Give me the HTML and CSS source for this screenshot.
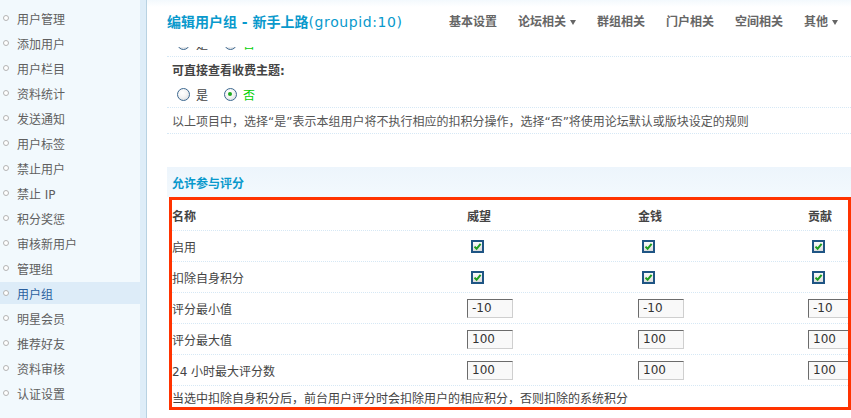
FILE: index.html
```html
<!DOCTYPE html>
<html lang="zh-CN">
<head>
<meta charset="utf-8">
<title>编辑用户组</title>
<link rel="stylesheet" href="styles.css">
</head>
<body>
<div class="app">
  <aside class="side">
    <ul class="menu">
      <li><span class="dot"></span>用户管理</li>
      <li><span class="dot"></span>添加用户</li>
      <li><span class="dot"></span>用户栏目</li>
      <li><span class="dot"></span>资料统计</li>
      <li><span class="dot"></span>发送通知</li>
      <li><span class="dot"></span>用户标签</li>
      <li><span class="dot"></span>禁止用户</li>
      <li><span class="dot"></span>禁止 IP</li>
      <li><span class="dot"></span>积分奖惩</li>
      <li><span class="dot"></span>审核新用户</li>
      <li><span class="dot"></span>管理组</li>
      <li class="on"><span class="dot"></span>用户组</li>
      <li><span class="dot"></span>明星会员</li>
      <li><span class="dot"></span>推荐好友</li>
      <li><span class="dot"></span>资料审核</li>
      <li><span class="dot"></span>认证设置</li>
    </ul>
  </aside>
  <div class="gutter"></div>
  <main class="main">
    <header class="topbar">
      <h3 class="title"><b class="cjk">编辑用户组 - 新手上路</b><span class="gid">(groupid:10)</span></h3>
      <nav class="nav">
        <span class="nav-item">基本设置</span>
        <span class="nav-item">论坛相关<i class="caret"></i></span>
        <span class="nav-item">群组相关</span>
        <span class="nav-item">门户相关</span>
        <span class="nav-item">空间相关</span>
        <span class="nav-item">其他<i class="caret"></i></span>
      </nav>
    </header>
    <div class="content">
      <div class="sheet">
        <div class="row clip">
          <label class="opt"><span class="radio"></span>是</label>
          <label class="opt yes"><span class="radio checked"></span>否</label>
        </div>
        <div class="row label">可直接查看收费主题:</div>
        <div class="row radios">
          <label class="opt"><span class="radio"></span>是</label>
          <label class="opt yes"><span class="radio checked"></span>否</label>
        </div>
        <div class="row tip">以上项目中，选择“是”表示本组用户将不执行相应的扣积分操作，选择“否”将使用论坛默认或版块设定的规则</div>

        <div class="band">允许参与评分</div>

        <div class="marked">
          <div class="grid">
            <div class="gr head">
              <div>名称</div><div>威望</div><div>金钱</div><div>贡献</div>
            </div>
            <div class="gr">
              <div>启用</div>
              <div><span class="cb"><svg viewBox="0 0 9 9"><path d="M1.5 4.6 L3.6 6.8 L7.6 1.8" /></svg></span></div>
              <div><span class="cb"><svg viewBox="0 0 9 9"><path d="M1.5 4.6 L3.6 6.8 L7.6 1.8" /></svg></span></div>
              <div><span class="cb"><svg viewBox="0 0 9 9"><path d="M1.5 4.6 L3.6 6.8 L7.6 1.8" /></svg></span></div>
            </div>
            <div class="gr">
              <div>扣除自身积分</div>
              <div><span class="cb"><svg viewBox="0 0 9 9"><path d="M1.5 4.6 L3.6 6.8 L7.6 1.8" /></svg></span></div>
              <div><span class="cb"><svg viewBox="0 0 9 9"><path d="M1.5 4.6 L3.6 6.8 L7.6 1.8" /></svg></span></div>
              <div><span class="cb"><svg viewBox="0 0 9 9"><path d="M1.5 4.6 L3.6 6.8 L7.6 1.8" /></svg></span></div>
            </div>
            <div class="gr">
              <div>评分最小值</div>
              <div><span class="txt">-10</span></div>
              <div><span class="txt">-10</span></div>
              <div><span class="txt">-10</span></div>
            </div>
            <div class="gr">
              <div>评分最大值</div>
              <div><span class="txt">100</span></div>
              <div><span class="txt">100</span></div>
              <div><span class="txt">100</span></div>
            </div>
            <div class="gr">
              <div>24 小时最大评分数</div>
              <div><span class="txt">100</span></div>
              <div><span class="txt">100</span></div>
              <div><span class="txt">100</span></div>
            </div>
            <div class="foot">当选中扣除自身积分后，前台用户评分时会扣除用户的相应积分，否则扣除的系统积分</div>
          </div>
        </div>
      </div>
    </div>
  </main>
</div>
</body>
</html>
```
FILE: styles.css
```css
* { box-sizing: border-box; }
html, body { margin: 0; padding: 0; }
body {
  width: 851px;
  height: 418px;
  overflow: hidden;
  background: #fff;
  color: #444;
  font: 12px "DejaVu Sans", "Noto Sans CJK SC", sans-serif;
}
.app { display: flex; height: 418px; }

/* sidebar */
.side { width: 140px; flex: none; background: #F2F9FD; padding-top: 7px; }
.menu { list-style: none; margin: 0; padding: 0; }
.menu li {
  height: 22px;
  margin-bottom: 3px;
  display: flex;
  align-items: center;
  color: #5f5f5f;
  white-space: nowrap;
}
.menu .dot {
  width: 6px; height: 6px;
  border: 1px solid #b4b4b4;
  border-radius: 50%;
  background: #fff;
  margin: 0 8px 0 3px;
  flex: none;
}
.menu li.on { background: #DDECF8; color: #2A5F9E; }
.gutter { width: 7px; flex: none; background: #DEEDF8; border-right: 1px solid #B8D2E2; }

/* main */
.main { flex: 1; min-width: 0; display: flex; flex-direction: column; overflow: hidden; }
.topbar {
  height: 47px;
  flex: none;
  display: flex;
  align-items: flex-start;
  padding: 10px 0 0 20px;
  white-space: nowrap;
  background: linear-gradient(#F3F9FD, #fff 7px);
  position: relative;
  z-index: 1;
}
.title {
  margin: 0;
  width: 282px;
  flex: none;
  font-size: 14px;
  font-weight: normal;
  line-height: 25px;
  color: #0999CC;
}
.title .cjk { font-weight: bold; }
.gid { letter-spacing: 0.6px; }
.nav { display: flex; gap: 21px; line-height: 25px; }
.nav-item { font-weight: bold; color: #666; display: flex; align-items: center; }
.caret {
  display: inline-block;
  margin-left: 4px;
  width: 0; height: 0;
  border-left: 3.5px solid transparent;
  border-right: 3.5px solid transparent;
  border-top: 5px solid #666;
}

.content { flex: 1; padding-left: 20px; overflow: hidden; }
.sheet { width: 840px; }

.row {
  display: flex;
  align-items: center;
  padding-left: 5px;
  border-bottom: 1px dotted #D6E8F5;
  white-space: nowrap;
}
.row.clip { height: 26px; margin-top: -16px; }
.row.label { height: 25px; border-bottom: none; font-weight: bold; color: #444; }
.row.radios { height: 26px; }
.row.tip { height: 26px; color: #555; }

.opt { display: flex; align-items: center; margin-right: 11px; color: #444; }
.opt.yes { color: #00D000; }
.radio {
  width: 13px; height: 13px;
  border-radius: 50%;
  border: 1.5px solid #3D6890;
  background: radial-gradient(circle at 40% 35%, #fff 0, #f4f4f4 45%, #cfd4da 100%);
  margin: 0 6px 0 5px;
  position: relative;
  flex: none;
}
.radio.checked::after {
  content: "";
  position: absolute;
  left: 3px; top: 3px;
  width: 4px; height: 4px;
  border-radius: 50%;
  background: #1DAA1D;
}

.band {
  margin-top: 33px;
  height: 30px;
  padding-left: 5px;
  display: flex;
  align-items: center;
  background: linear-gradient(#EDF5FC, #F3F9FD);
  color: #0999CC;
  font-weight: bold;
}

.marked {
  margin-left: 2px;
  width: 682px;
  border: 3px solid #FF3300;
  overflow: hidden;
}
.grid { width: 900px; }
.gr {
  display: grid;
  grid-template-columns: 295px 171px 170px 170px;
  height: 31px;
  align-items: center;
  border-bottom: 1px dotted #D6E8F5;
  white-space: nowrap;
}
.gr.head { font-weight: bold; color: #444; }
.cb {
  display: block;
  width: 13px; height: 13px;
  margin-left: 4px;
  border: 2px solid #1F5584;
  background: linear-gradient(#fbfbfb, #dcdcdc);
}
.cb svg { display: block; width: 9px; height: 9px; }
.cb path { fill: none; stroke: #1E9E1E; stroke-width: 2; }
.txt {
  display: flex;
  align-items: center;
  width: 46px; height: 19px;
  padding-left: 4px;
  border: 1px solid;
  border-color: #6b6b6b #cfcfcf #cfcfcf #6b6b6b;
  background: #F9F9F9;
  color: #333;
  font-size: 12px;
}
.foot { height: 21px; padding-top: 6px; line-height: 14px; white-space: nowrap; color: #444; }
```
